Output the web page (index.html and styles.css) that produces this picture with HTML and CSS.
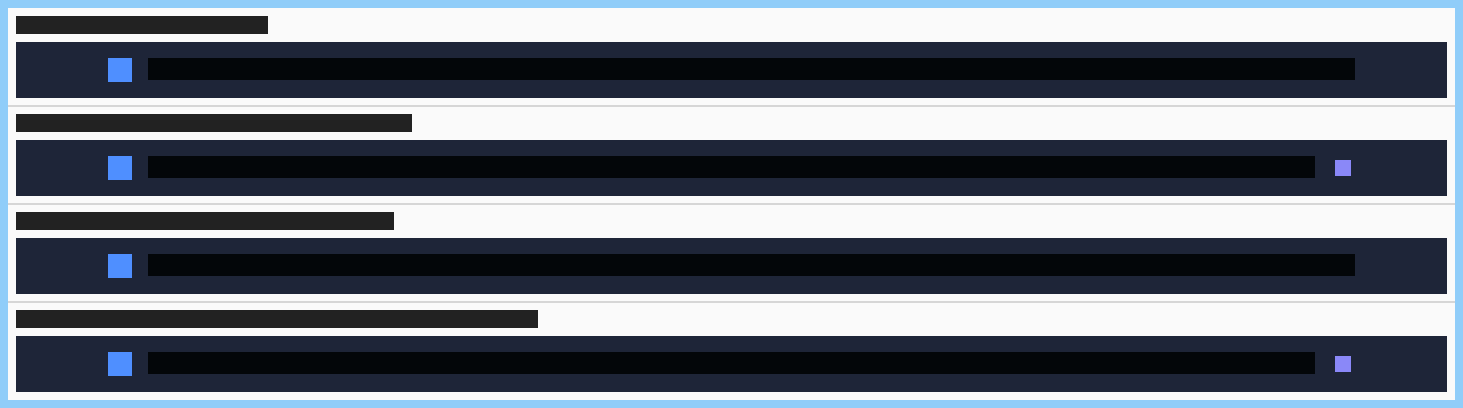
FILE: index.html
```html
<!DOCTYPE html>
<html>
<head>
<meta charset="utf-8">
<link rel="stylesheet" href="styles.css">
</head>
<body>
<div class="panel">
  <section class="item">
    <div class="title w1"></div>
    <div class="row">
      <div class="icon"></div>
      <div class="line"></div>
    </div>
  </section>
  <section class="item">
    <div class="title w2"></div>
    <div class="row">
      <div class="icon"></div>
      <div class="line"></div>
      <div class="badge"><div class="dot"></div></div>
    </div>
  </section>
  <section class="item">
    <div class="title w3"></div>
    <div class="row">
      <div class="icon"></div>
      <div class="line"></div>
    </div>
  </section>
  <section class="item">
    <div class="title w4"></div>
    <div class="row">
      <div class="icon"></div>
      <div class="line"></div>
      <div class="badge"><div class="dot"></div></div>
    </div>
  </section>
</div>
</body>
</html>
```
FILE: styles.css
```css
html {
  background: #90cdf9;
}
body {
  margin: 0;
  padding: 8px;
  font-family: "Liberation Sans", Arial, sans-serif;
}
.panel {
  background: #fafafa;
  height: 392px;
  box-sizing: border-box;
  display: flex;
  flex-direction: column;
}
.item {
  padding: 7px 8px;
  display: flex;
  flex-direction: column;
  gap: 8px;
}
.item:first-child {
  padding-top: 8px;
}
.item:last-child {
  padding-bottom: 8px;
}
.item + .item {
  border-top: 2px solid #d6d6d6;
}
.title {
  height: 18px;
  background: #222222;
}
.w1 { width: 252px; }
.w2 { width: 396px; }
.w3 { width: 378px; }
.w4 { width: 522px; }
.row {
  height: 56px;
  box-sizing: border-box;
  background: #1e2538;
  padding: 16px 92px;
  display: flex;
  align-items: flex-start;
  gap: 16px;
}
.icon {
  width: 24px;
  height: 24px;
  background: #4f8fff;
  flex: none;
}
.line {
  flex: 1;
  height: 22px;
  background: #030609;
}
.badge {
  width: 24px;
  height: 24px;
  flex: none;
  display: flex;
  align-items: center;
  justify-content: center;
}
.dot {
  width: 16px;
  height: 16px;
  background: #8a88f8;
}
```
